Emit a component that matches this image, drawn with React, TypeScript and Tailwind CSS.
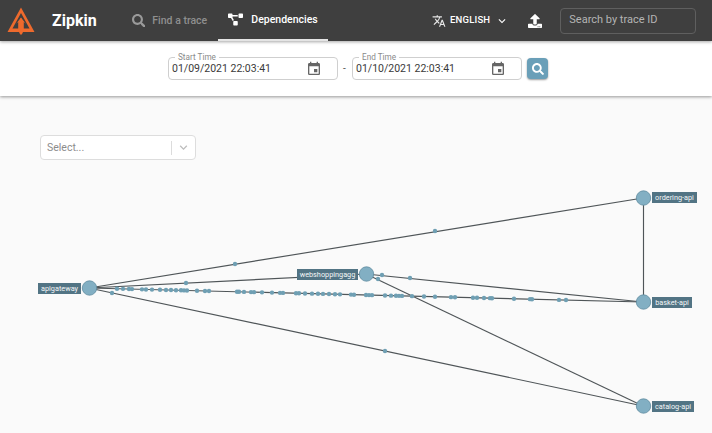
import { FaProjectDiagram, FaSearch, FaUpload } from "react-icons/fa";
import { MdEvent, MdExpandMore, MdTranslate } from "react-icons/md";

const nodes = [
  { name: "apigateway", x: 89.5, y: 288, lx: 38, lw: 43, ly: 283 },
  { name: "webshoppingagg", x: 366.5, y: 274, lx: 297, lw: 61, ly: 269 },
  { name: "ordering-api", x: 643.5, y: 198, lx: 652, lw: 45, ly: 192 },
  { name: "basket-api", x: 643.5, y: 302, lx: 652, lw: 40, ly: 297 },
  { name: "catalog-api", x: 643.5, y: 406, lx: 652, lw: 42, ly: 401 },
];

const edges = [
  [89, 288, 643, 198],
  [89, 288, 366, 274],
  [89, 288, 643, 302],
  [89, 288, 643, 406],
  [366, 274, 643, 302],
  [366, 274, 643, 406],
  [643.5, 198, 643.5, 302],
];

// traffic dots sitting on the apigateway -> basket-api edge
const busyDots = [
  117, 123, 129, 132, 142, 146, 152, 160, 166, 171, 176, 181, 184, 187, 197, 205, 209, 237, 239, 244, 251,
  254, 262, 272, 280, 283, 296, 299, 305, 312, 318, 323, 329, 335, 340, 351, 354, 366, 369, 372, 385, 391,
  396, 399, 402, 412, 424, 435, 451, 455, 473, 477, 484, 490, 492, 514, 530, 532, 559, 566,
];

const looseDots = [
  [235, 264],
  [435, 231],
  [186, 283],
  [112, 293],
  [385, 351],
  [382, 275],
  [410, 278],
  [378, 279],
];

function ServiceGraph() {
  return (
    <svg width="712" height="337" viewBox="0 96 712 337" className="absolute inset-0">
      {edges.map(([x1, y1, x2, y2], i) => (
        <line key={i} x1={x1} y1={y1} x2={x2} y2={y2} stroke="#4f5558" strokeWidth="1.15" />
      ))}
      {busyDots.map((x) => (
        <circle key={x} cx={x} cy={288 + ((x - 89) * 14) / 554} r="2.2" fill="#6f9fb3" />
      ))}
      {looseDots.map(([x, y]) => (
        <circle key={x} cx={x} cy={y} r="2.2" fill="#6f9fb3" />
      ))}
      {nodes.map((n) => (
        <g key={n.name}>
          <circle cx={n.x} cy={n.y} r="7.2" fill="#82afc3" stroke="#5d8a9e" strokeWidth="0.8" />
          <rect x={n.lx} y={n.ly} width={n.lw} height="11" fill="#527484" />
          <text
            x={n.lx + n.lw / 2}
            y={n.ly + 8}
            textAnchor="middle"
            fill="#f4f7f8"
            fontSize="7.3"
            fontFamily="Roboto, sans-serif"
          >
            {n.name}
          </text>
        </g>
      ))}
    </svg>
  );
}

function ZipkinLogo() {
  return (
    <svg width="28" height="28" viewBox="0 0 28 28" className="ml-[7px]">
      <path
        d="M14 0.5 L27.5 25 L16 25 L14.8 27.5 L13.2 27.5 L12 25 L0.5 25 Z M14 6 L5.5 21.5 L11.2 21.5 L11.2 15 L9.2 16.8 L14 10.5 L18.8 16.8 L16.8 15 L16.8 21.5 L22.5 21.5 Z"
        fill="#ee6a2d"
        fillRule="evenodd"
      />
      <path d="M13.3 11.5 H14.7 V27 H13.3 Z" fill="#ee6a2d" />
    </svg>
  );
}

function DateField({ label, value, width }: { label: string; value: string; width: string }) {
  return (
    <div className={`relative h-[23px] ${width} flex items-center justify-between pl-[3px] pr-[15px] rounded border border-[#cfcfcf]`}>
      <span className="absolute -top-[6px] left-[6px] bg-white px-[3px] text-[8.2px] leading-[10px] text-[#8a8a8a]">
        {label}
      </span>
      <span className="text-[10.5px] text-[#3a3a3a]">{value}</span>
      <MdEvent className="text-[#666666] text-[16px]" />
    </div>
  );
}

export default function App() {
  return (
    <div className="h-[433px] w-[712px] overflow-hidden flex flex-col bg-[#fafafa] font-['Roboto',sans-serif]">
      <header className="h-[41px] shrink-0 flex items-center bg-[#3f3f3f] shadow-[0_1px_3px_rgba(0,0,0,0.35)] z-20">
        <ZipkinLogo />
        <span className="ml-[17px] text-[16px] font-bold text-white w-[56px]">Zipkin</span>
        <div className="w-[110px] pl-[13px] flex items-center justify-center gap-[7px] h-full">
          <FaSearch className="text-[#9a9a9a] text-[13.5px]" />
          <span className="text-[10.5px] font-medium text-[#8f8f8f]">Find a trace</span>
        </div>
        <div className="w-[110px] h-full flex items-center justify-center gap-[8px] border-b-2 border-[#e4e4e4]">
          <FaProjectDiagram className="text-white text-[15px]" />
          <span className="text-[10.5px] font-medium text-white">Dependencies</span>
        </div>
        <div className="ml-[104px] flex items-center">
          <MdTranslate className="text-[#e8e8e8] text-[14px]" />
          <span className="ml-[4px] text-[9.5px] font-medium text-white tracking-[0.2px]">ENGLISH</span>
          <MdExpandMore className="ml-[5px] text-white text-[14px]" />
        </div>
        <FaUpload className="ml-[19px] text-white text-[14px]" />
        <div className="ml-[18px] w-[136px] h-[26px] flex items-center pl-[8px] rounded border border-[#5f5f5f] text-[11px] text-[#b4b4b4]">
          Search by trace ID
        </div>
      </header>
      <div className="h-[55px] shrink-0 flex items-start justify-center gap-[5px] pt-[16px] pl-[4px] bg-white shadow-[0_1px_3px_rgba(0,0,0,0.4)] z-10">
        <DateField label="Start Time" value="01/09/2021 22:03:41" width="w-[170px]" />
        <span className="w-[4px] mt-[4px] text-[10px] text-[#555555]">-</span>
        <DateField label="End Time" value="01/10/2021 22:03:41" width="w-[170px]" />
        <button className="w-[21px] h-[21px] mt-[1px] flex items-center justify-center rounded-sm bg-[#6a9fb8] shadow-[0_1px_2px_rgba(0,0,0,0.4)]">
          <FaSearch className="text-white text-[12px]" />
        </button>
      </div>
      <main className="relative flex-1 pt-[39px] pl-[40px]">
        <ServiceGraph />
        <div className="relative w-[156px] h-[25px] flex items-center rounded border border-[#dddddd] bg-white">
          <span className="flex-1 pl-[6px] text-[10.5px] text-[#8c8c8c]">Select...</span>
          <span className="h-[14px] w-px bg-[#dcdcdc]" />
          <MdExpandMore className="mx-[4px] text-[#bdbdbd] text-[15px]" />
        </div>
      </main>
    </div>
  );
}
